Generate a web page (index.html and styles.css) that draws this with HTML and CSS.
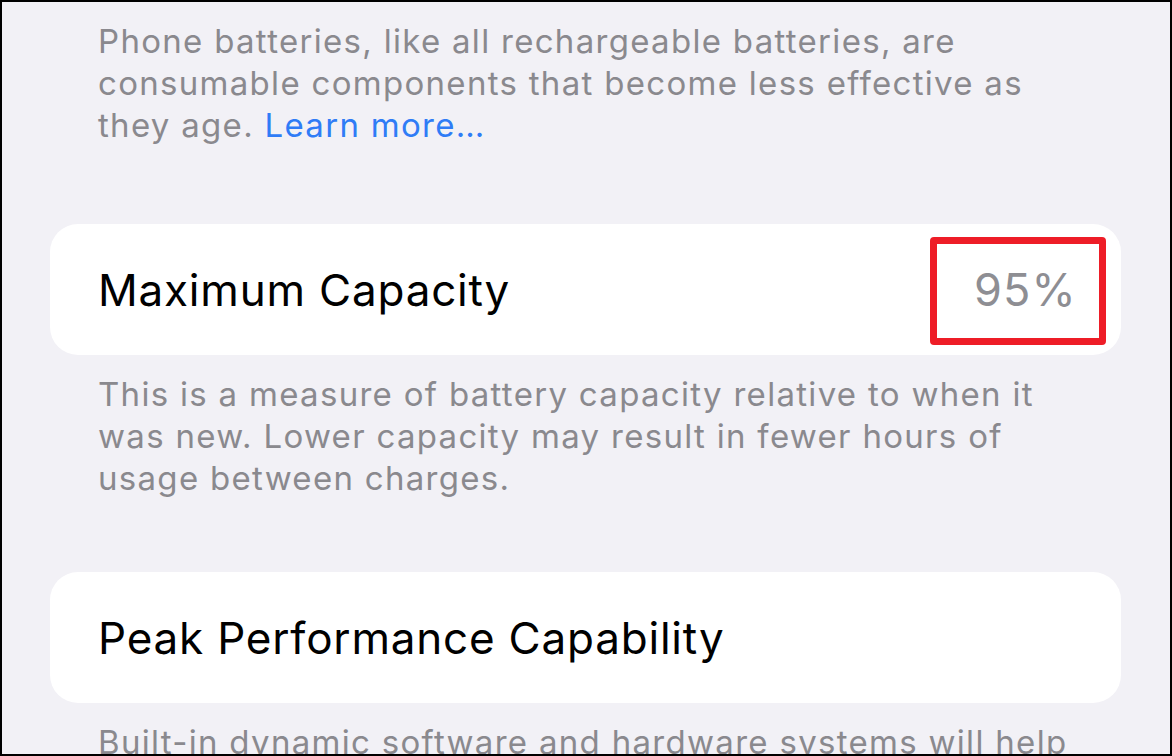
FILE: index.html
```html
<!DOCTYPE html>
<html lang="en">

<head>
    <meta charset="UTF-8">
    <meta name="viewport" content="width=device-width, initial-scale=1.0">
    <title>Battery Health</title>
    <link rel="stylesheet" href="styles.css">
</head>

<body>
    <div class="page">
        <p class="footnote first">
            Phone batteries, like all rechargeable batteries, are consumable components that become less effective as they age. <a href="#" class="link">Learn more…</a>
        </p>

        <div class="card">
            <span class="label">Maximum Capacity</span>
            <span class="value">95%<span class="mark"></span></span>
        </div>
        <p class="footnote">
            This is a measure of battery capacity relative to when it was new. Lower capacity may result in fewer hours of usage between charges.
        </p>

        <div class="card">
            <span class="label">Peak Performance Capability</span>
        </div>
        <p class="footnote">
            Built-in dynamic software and hardware systems will help counter performance impacts that may be noticed as your iPhone battery chemically ages.
        </p>
    </div>
</body>

</html>
```

FILE: styles.css
```css
html,
body {
    margin: 0;
    padding: 0;
}

body {
    width: 1172px;
    height: 756px;
    box-sizing: border-box;
    border: 2px solid #000;
    overflow: hidden;
    background-color: #f2f1f6;
    font-family: 'Inter', 'Noto Sans', sans-serif;
}

.page {
    padding: 0 49px 0 48px;
}

.footnote {
    margin: 18px 0 73px;
    padding: 0 48px;
    font-size: 33px;
    line-height: 42px;
    letter-spacing: 1.3px;
    color: #8a898e;
}

.footnote.first {
    margin-top: 18px;
    margin-bottom: 78px;
}

.link {
    color: #2f7cf6;
    text-decoration: none;
}

.card {
    display: flex;
    align-items: center;
    justify-content: space-between;
    height: 131px;
    padding: 0 48px;
    background-color: #fff;
    border-radius: 28px;
}

.label {
    font-size: 44px;
    line-height: 54px;
    letter-spacing: 0.8px;
    color: #000;
}

.value {
    position: relative;
    font-size: 45px;
    line-height: 54px;
    letter-spacing: 1.2px;
    margin-right: -4px;
    color: #8e8e93;
}

.mark {
    position: absolute;
    left: -44px;
    right: -29px;
    top: -26px;
    bottom: -28px;
    border: 7px solid #ee1d27;
    border-radius: 4px;
}
```
